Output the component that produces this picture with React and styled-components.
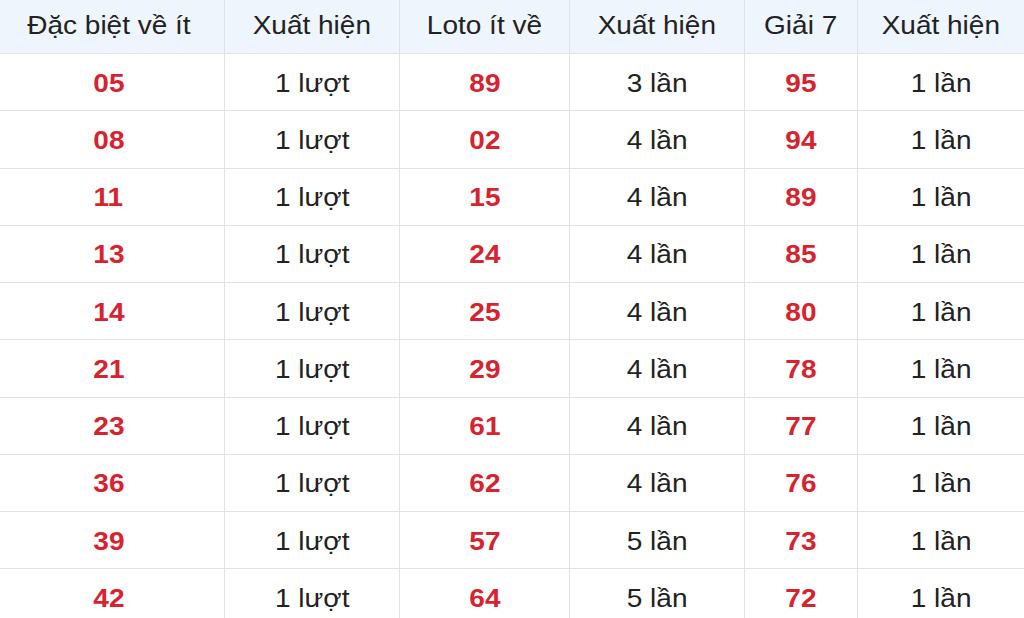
import React from "react";
import styled, { createGlobalStyle } from "styled-components";

const Global = createGlobalStyle`
  html, body { margin: 0; padding: 0; background: #fff; }
  body { font-family: "Liberation Sans", Arial, sans-serif; overflow: hidden; }
`;

const COLS = "225px 175px 170px 175px 113px 166px";

const Table = styled.div`
  width: 1024px;
  display: flex;
  flex-direction: column;
`;

const Row = styled.div`
  display: grid;
  grid-template-columns: ${COLS};
  height: ${(p) => (p.$head ? "53px" : "56.25px")};
  border-bottom: 1px solid #dfe3e8;
  background: ${(p) => (p.$head ? "#eef5fd" : "#fff")};
`;

const Cell = styled.div`
  display: flex;
  align-items: center;
  justify-content: center;
  border-right: 1px solid #dfe3e8;
  &:first-child { padding-right: 7px; }
  &:last-child { border-right: none; }
`;

const Text = styled.span`
  display: inline-block;
  font-size: 25px;
  transform: scaleX(1.12);
  white-space: nowrap;
  color: ${(p) => (p.$red ? "#d8232f" : "#222")};
  font-weight: ${(p) => (p.$red ? 700 : 400)};
  margin-top: ${(p) => (p.$head ? "-3px" : "2px")};
`;

const headers = ["Đặc biệt về ít", "Xuất hiện", "Loto ít về", "Xuất hiện", "Giải 7", "Xuất hiện"];

const rows = [
  ["05", "1 lượt", "89", "3 lần", "95", "1 lần"],
  ["08", "1 lượt", "02", "4 lần", "94", "1 lần"],
  ["11", "1 lượt", "15", "4 lần", "89", "1 lần"],
  ["13", "1 lượt", "24", "4 lần", "85", "1 lần"],
  ["14", "1 lượt", "25", "4 lần", "80", "1 lần"],
  ["21", "1 lượt", "29", "4 lần", "78", "1 lần"],
  ["23", "1 lượt", "61", "4 lần", "77", "1 lần"],
  ["36", "1 lượt", "62", "4 lần", "76", "1 lần"],
  ["39", "1 lượt", "57", "5 lần", "73", "1 lần"],
  ["42", "1 lượt", "64", "5 lần", "72", "1 lần"],
];

export default function App() {
  return (
    <>
      <Global />
      <Table>
        <Row $head>
          {headers.map((h, i) => (
            <Cell key={i}>
              <Text $head>{h}</Text>
            </Cell>
          ))}
        </Row>
        {rows.map((r, ri) => (
          <Row key={ri}>
            {r.map((c, ci) => (
              <Cell key={ci}>
                <Text $red={ci % 2 === 0}>{c}</Text>
              </Cell>
            ))}
          </Row>
        ))}
      </Table>
    </>
  );
}
